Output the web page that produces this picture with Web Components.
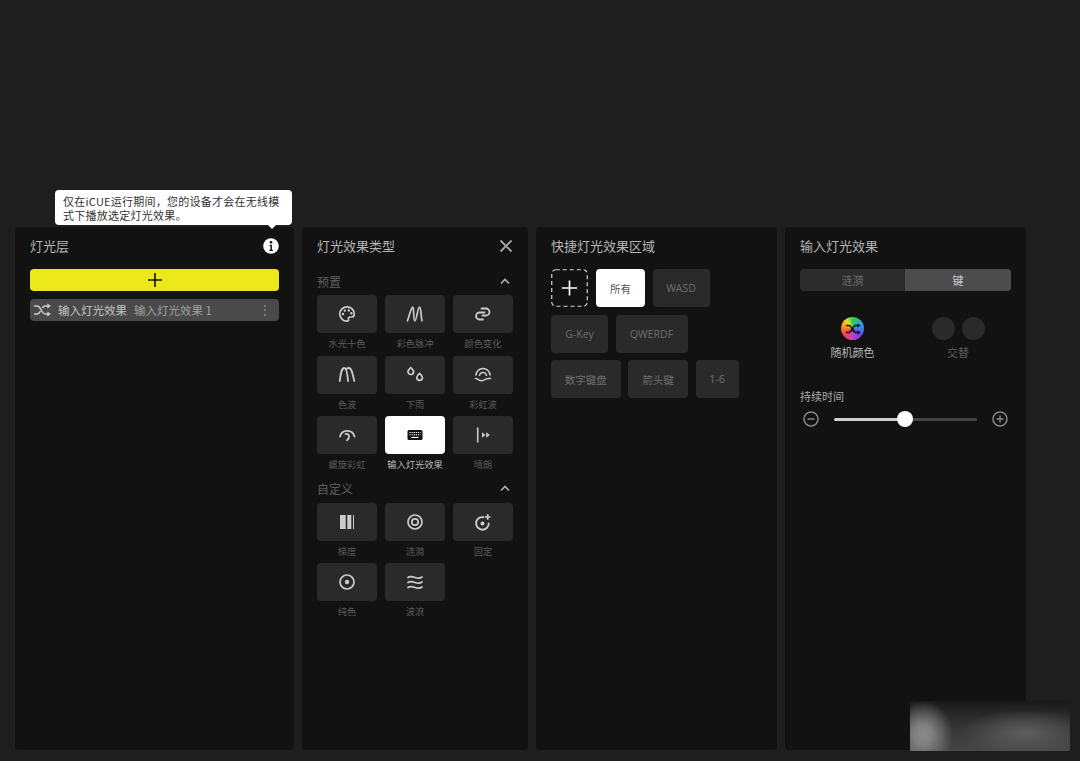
<!DOCTYPE html>
<html lang="zh">
<head>
<meta charset="utf-8">
<title>灯光层</title>
<style>
  html, body { margin: 0; height: 761px; overflow: hidden; background: #1e1e1e; }
  body { font-family: "Noto Sans CJK SC", "Open Sans", sans-serif; }
</style>
</head>
<body>
<app-shell>
  <info-tip slot="overlay">仅在iCUE运行期间，您的设备才会在无线模式下播放选定灯光效果。</info-tip>
  <blur-mark slot="overlay"></blur-mark>

  <side-panel title="灯光层" width="279" icon="info">
    <add-bar></add-bar>
    <layer-row name="输入灯光效果" sub="输入灯光效果 1"></layer-row>
  </side-panel>

  <side-panel title="灯光效果类型" width="226" icon="close">
    <effect-group title="预置">
      <effect-tile icon="palette" label="水光十色"></effect-tile>
      <effect-tile icon="pulse" label="彩色脉冲"></effect-tile>
      <effect-tile icon="link" label="颜色变化"></effect-tile>
      <effect-tile icon="wave" label="色波"></effect-tile>
      <effect-tile icon="rain" label="下雨"></effect-tile>
      <effect-tile icon="rainbow" label="彩虹波"></effect-tile>
      <effect-tile icon="spiral" label="螺旋彩虹"></effect-tile>
      <effect-tile icon="keyboard" label="输入灯光效果" active></effect-tile>
      <effect-tile icon="visor" label="晴朗"></effect-tile>
    </effect-group>
    <effect-group title="自定义">
      <effect-tile icon="gradient" label="梯度"></effect-tile>
      <effect-tile icon="ripple" label="涟漪"></effect-tile>
      <effect-tile icon="fixed" label="固定"></effect-tile>
      <effect-tile icon="solid" label="纯色"></effect-tile>
      <effect-tile icon="waves" label="波浪"></effect-tile>
    </effect-group>
  </side-panel>

  <side-panel title="快捷灯光效果区域" width="241">
    <zone-list>
      <zone-row>
        <zone-chip w="37.5"><svg width="37" height="38" viewBox="0 0 37 38"><rect x=".75" y=".75" width="35.5" height="36.5" rx="4" fill="none" stroke="#d4d4d4" stroke-width="1.2" stroke-dasharray="4 3"/><path d="M18.500 11.500v15M11 19h15" stroke="#fff" stroke-width="1.700"/></svg></zone-chip>
        <zone-chip active w="49">所有</zone-chip>
        <zone-chip w="57">WASD</zone-chip>
      </zone-row>
      <zone-row>
        <zone-chip w="57">G-Key</zone-chip>
        <zone-chip w="72">QWERDF</zone-chip>
      </zone-row>
      <zone-row>
        <zone-chip w="69.5">数字键盘</zone-chip>
        <zone-chip w="60">箭头键</zone-chip>
        <zone-chip w="43">1-6</zone-chip>
      </zone-row>
    </zone-list>
  </side-panel>

  <side-panel title="输入灯光效果" width="241">
    <seg-toggle left="涟漪" right="键"></seg-toggle>
    <color-modes></color-modes>
    <time-slider label="持续时间" value="50"></time-slider>
  </side-panel>
</app-shell>

<script>
const ICONS = {
  info: '<svg width="16" height="16" viewBox="0 0 16 16"><circle cx="8" cy="8" r="7.800" fill="#fff"/><circle cx="8" cy="4.200" r="1.300" fill="#121212"/><path d="M6.600 6.700h2.300v5h1v1.200H6.400v-1.200h1V7.900h-.8z" fill="#121212"/></svg>',
  close: '<svg width="14" height="14" viewBox="0 0 14 14"><path d="M1.500 1.500l11 11M12.500 1.500l-11 11" stroke="#a8a8a8" stroke-width="1.800" fill="none"/></svg>',
  palette: '<svg width="18" height="18" viewBox="0 0 18 18"><path d="M9 1.800a7.200 7.200 0 1 0 0 14.400c1.500 0 1.900-1 1.500-2-.4-1.100.2-2.200 1.500-2.200h2c1.300 0 2.200-1 2.200-3C16.200 4.800 13 1.800 9 1.800z" fill="none" stroke="#ccc" stroke-width="1.700"/><circle cx="5" cy="9" r="1.200" fill="#ccc"/><circle cx="6.800" cy="5.600" r="1.200" fill="#ccc"/><circle cx="10.800" cy="5.400" r="1.200" fill="#ccc"/><circle cx="13.300" cy="8.200" r="1.200" fill="#ccc"/></svg>',
  pulse: '<svg width="18" height="18" viewBox="0 0 18 18"><path d="M1.500 15.800C3.500 10 5.200 2.200 6.800 2.200 8.300 2.200 7 15.800 8.800 15.800 10.600 15.800 11.800 2.200 13.500 2.200 15.200 2.200 14.800 11 16 15.800" fill="none" stroke="#ccc" stroke-width="1.700" stroke-linecap="round"/></svg>',
  link: '<svg width="18" height="18" viewBox="0 0 18 18"><path d="M7.500 3.500H12a3.500 3.500 0 0 1 0 7H8.500" fill="none" stroke="#ccc" stroke-width="1.800" stroke-linecap="round"/><path d="M10.500 7.500H5.500a3.500 3.500 0 0 0 0 7H9" fill="none" stroke="#ccc" stroke-width="1.800" stroke-linecap="round"/></svg>',
  wave: '<svg width="18" height="18" viewBox="0 0 18 18"><path d="M1.800 15C2.800 6 3.800 2 6.300 2S9.500 8 10 15" fill="none" stroke="#ccc" stroke-width="1.800" stroke-linecap="round"/><path d="M8.300 2.800C9.200 2.200 10.200 2 11 2 13.800 2 14.500 8 16.300 15" fill="none" stroke="#ccc" stroke-width="1.800" stroke-linecap="round"/></svg>',
  rain: '<svg width="18" height="18" viewBox="0 0 18 18"><path d="M4.800 1.600c1.700 1.500 2.800 2.700 2.800 4.100a2.800 2.800 0 0 1-5.600 0c0-1.400 1.100-2.600 2.800-4.100z" fill="none" stroke="#ccc" stroke-width="1.700"/><path d="M13.600 7.400c1.700 1.500 2.800 2.700 2.800 4.100a2.800 2.800 0 0 1-5.600 0c0-1.400 1.100-2.600 2.800-4.100z" fill="none" stroke="#ccc" stroke-width="1.700"/></svg>',
  rainbow: '<svg width="18" height="18" viewBox="0 0 18 18"><path d="M2 9.500a7 7 0 0 1 14 0" fill="none" stroke="#ccc" stroke-width="1.600"/><path d="M5.500 10a3.500 3.500 0 0 1 7 0" fill="none" stroke="#ccc" stroke-width="1.600"/><path d="M1.500 12.500c2.500 0 3.500 2.700 6.500 2.200s4-2.700 8.500-2.200" fill="none" stroke="#ccc" stroke-width="1.600" stroke-linecap="round"/></svg>',
  spiral: '<svg width="18" height="18" viewBox="0 0 18 18"><path d="M2 10.500A7.500 7.500 0 0 1 16.500 10.500" fill="none" stroke="#ccc" stroke-width="1.800" stroke-linecap="round"/><path d="M7.500 8c2-.5 3.500.5 3.500 2.500 0 1.500-1 3-2 3.700" fill="none" stroke="#ccc" stroke-width="1.800" stroke-linecap="round"/></svg>',
  keyboard: '<svg width="18" height="18" viewBox="0 0 18 18"><rect x="1.500" y="4" width="15" height="10" rx="1.500" fill="#111"/><path d="M3.500 6.500h11M3.500 8.800h11" stroke="#fff" stroke-width="1.100" stroke-dasharray="1.200 .9"/><path d="M5.500 11.400h7" stroke="#fff" stroke-width="1.100"/></svg>',
  visor: '<svg width="18" height="18" viewBox="0 0 18 18"><path d="M3.700 1.500v15" stroke="#ccc" stroke-width="1.600"/><path d="M8 6.300l3.500 2.700L8 11.700zM12.200 6.300l3.700 2.700-3.700 2.700z" fill="#ccc"/></svg>',
  gradient: '<svg width="18" height="18" viewBox="0 0 18 18"><rect x="2" y="2" width="5.700" height="14" fill="#ccc"/><rect x="9.300" y="2" width="4" height="14" fill="#ccc"/><rect x="15" y="2" width="1" height="14" fill="#ccc"/></svg>',
  ripple: '<svg width="18" height="18" viewBox="0 0 18 18"><circle cx="9" cy="9" r="7" fill="none" stroke="#ccc" stroke-width="1.700"/><circle cx="9" cy="9" r="3.200" fill="none" stroke="#ccc" stroke-width="1.700"/></svg>',
  fixed: '<svg width="18" height="18" viewBox="0 0 18 18"><path d="M9.500 4.200a6.300 6.300 0 1 0 5.200 6.200" fill="none" stroke="#ccc" stroke-width="1.900" stroke-linecap="round"/><circle cx="8.500" cy="10.500" r="2" fill="#ccc"/><path d="M13.700 1.300v5.400M11 4h5.400" stroke="#ccc" stroke-width="1.700"/></svg>',
  solid: '<svg width="18" height="18" viewBox="0 0 18 18"><circle cx="9" cy="9" r="7" fill="none" stroke="#ccc" stroke-width="1.700"/><circle cx="9" cy="9" r="2.200" fill="#ccc"/></svg>',
  waves: '<svg width="18" height="18" viewBox="0 0 18 18"><g fill="none" stroke="#ccc" stroke-width="1.700" stroke-linecap="round"><path d="M2 4.500c2-1.500 4-1 7 0s5 1 7-.5"/><path d="M2 9.500c2-1.500 4-1 7 0s5 1 7-.5"/><path d="M2 14.500c2-1.500 4-1 7 0s5 1 7-.5"/></g></svg>',
  shuffle: '<svg width="18" height="14" viewBox="0 0 18 14"><g fill="none" stroke="#ccc" stroke-width="1.500"><path d="M1 3h3.500c3 0 4.500 8 7.500 8h3"/><path d="M1 11h3.500c1.300 0 2.200-1.300 3-2.800M9.300 5C10 3.900 10.900 3 12 3h3"/></g><path d="M14.300 .5 18 3l-3.700 2.500zM14.300 8.500 18 11l-3.700 2.500z" fill="#ccc"/></svg>'
};

class AppShell extends HTMLElement {
  constructor() {
    super();
    this.attachShadow({ mode: "open" });
    this.shadowRoot.innerHTML = `
      <style>
        :host { display: flex; gap: 8px; padding: 227px 0 0 15px; height: 523px; position: relative; }
      </style>
      <slot></slot>
      <slot name="overlay"></slot>
    `;
  }
}

class SidePanel extends HTMLElement {
  constructor() {
    super();
    this.attachShadow({ mode: "open" });
    const icon = this.getAttribute("icon");
    this.shadowRoot.innerHTML = `
      <style>
        :host { display: block; width: ${this.getAttribute("width")}px; height: 523px; background: #121212; border-radius: 4px; padding: 9px 15px 0; box-sizing: border-box; flex: none; }
        .head { display: flex; align-items: center; justify-content: space-between; height: 20px; margin-bottom: 13px; }
        .title { font-size: 13px; line-height: 20px; color: #b4b4b4; }
        .ico { display: flex; }
      </style>
      <div class="head">
        <span class="title">${this.getAttribute("title")}</span>
        ${icon ? `<span class="ico ${icon}">${ICONS[icon]}</span>` : ""}
      </div>
      <slot></slot>
    `;
  }
}

class InfoTip extends HTMLElement {
  constructor() {
    super();
    this.attachShadow({ mode: "open" });
    this.shadowRoot.innerHTML = `
      <style>
        :host { position: absolute; left: 55px; top: 190px; width: 237px; height: 35px; box-sizing: border-box; padding: 3.500px 8px; background: #fff; border-radius: 4px; color: #333; font-size: 11px; line-height: 14.500px; letter-spacing: .25px; }
        .arrow { position: absolute; left: 213px; bottom: -4px; width: 0; height: 0; border-left: 4px solid transparent; border-right: 4px solid transparent; border-top: 4px solid #fff; }
      </style>
      <slot></slot>
      <div class="arrow"></div>
    `;
  }
}

class BlurMark extends HTMLElement {
  constructor() {
    super();
    this.attachShadow({ mode: "open" });
    this.shadowRoot.innerHTML = `
      <style>
        :host { position: absolute; left: 910px; top: 701px; width: 160px; height: 50px;
          background:
            radial-gradient(ellipse 30px 34px at 13px 34px, #8a8a8a 0%, #808080 30%, rgba(120,120,120,0) 100%),
            radial-gradient(ellipse 65px 24px at 115px 32px, #5e5e5e 0%, rgba(94,94,94,0) 100%),
            linear-gradient(#1a1a1a 0%, #2f2f2f 40%, #474747 100%); }
      </style>
    `;
  }
}

class AddBar extends HTMLElement {
  constructor() {
    super();
    this.attachShadow({ mode: "open" });
    this.shadowRoot.innerHTML = `
      <style>
        :host { display: flex; align-items: center; justify-content: center; height: 22px; background: #ece81a; border-radius: 4px; margin-bottom: 8px; }
        svg { display: block; }
      </style>
      <svg width="14" height="14" viewBox="0 0 14 14"><path d="M7 0v14M0 7h14" stroke="#111" stroke-width="1.600"/></svg>
    `;
  }
}

class LayerRow extends HTMLElement {
  constructor() {
    super();
    this.attachShadow({ mode: "open" });
    this.shadowRoot.innerHTML = `
      <style>
        :host { display: flex; align-items: center; height: 22px; background: #4a4a4a; border-radius: 4px; padding: 0 13px 0 3px; font-size: 11.500px; }
        .ico { display: flex; width: 25px; }
        .name { color: #c4c4c4; margin-right: 7px; }
        .sub { color: #a0a0a0; flex: 1; }
        .dots { display: flex; flex-direction: column; gap: 2.500px; }
        .dots i { width: 2px; height: 2px; border-radius: 50%; background: #8a8a8a; }
      </style>
      <span class="ico">${ICONS.shuffle}</span>
      <span class="name">${this.getAttribute("name")}</span>
      <span class="sub">${this.getAttribute("sub")}</span>
      <span class="dots"><i></i><i></i><i></i></span>
    `;
  }
}

class EffectGroup extends HTMLElement {
  constructor() {
    super();
    this.attachShadow({ mode: "open" });
    this.shadowRoot.innerHTML = `
      <style>
        :host { display: block; padding-top: 2px; }
        .head { display: flex; align-items: center; justify-content: space-between; height: 20px; margin-bottom: 4px; color: #5f5f5f; font-size: 12px; }
        svg { display: block; margin-right: 3px; }
        .grid { display: grid; grid-template-columns: repeat(3, 60px); column-gap: 8px; }
      </style>
      <div class="head">
        <span>${this.getAttribute("title")}</span>
        <svg width="10" height="7" viewBox="0 0 10 7"><path d="M1 5.500l4-4 4 4" fill="none" stroke="#b0b0b0" stroke-width="1.600"/></svg>
      </div>
      <div class="grid"><slot></slot></div>
    `;
  }
}

class EffectTile extends HTMLElement {
  constructor() {
    super();
    this.attachShadow({ mode: "open" });
    const on = this.hasAttribute("active");
    this.shadowRoot.innerHTML = `
      <style>
        :host { display: block; height: 60.500px; }
        .box { height: 38px; border-radius: 4px; background: ${on ? "#fff" : "#2a2a2a"}; display: flex; align-items: center; justify-content: center; }
        .label { text-align: center; font-size: 9.250px; line-height: 21px; color: ${on ? "#b8b8b8" : "#5a5a5a"}; white-space: nowrap; }
      </style>
      <div class="box">${ICONS[this.getAttribute("icon")]}</div>
      <div class="label">${this.getAttribute("label")}</div>
    `;
  }
}

class ZoneList extends HTMLElement {
  constructor() {
    super();
    this.attachShadow({ mode: "open" });
    this.shadowRoot.innerHTML = `
      <style>
        :host { display: flex; flex-direction: column; gap: 7.500px; }
      </style>
      <slot></slot>
    `;
  }
}

class ZoneRow extends HTMLElement {
  constructor() {
    super();
    this.attachShadow({ mode: "open" });
    this.shadowRoot.innerHTML = `
      <style>
        :host { display: flex; gap: 7.500px; }
      </style>
      <slot></slot>
    `;
  }
}

class ZoneChip extends HTMLElement {
  constructor() {
    super();
    this.attachShadow({ mode: "open" });
    const on = this.hasAttribute("active");
    const plain = !this.textContent.trim();
    this.shadowRoot.innerHTML = `
      <style>
        :host { display: flex; align-items: center; justify-content: center; box-sizing: border-box; width: ${this.getAttribute("w")}px; height: 38px; border-radius: 4px; font-size: 10.500px; font-family: "Open Sans", "Noto Sans CJK SC", sans-serif;
          background: ${plain ? "transparent" : on ? "#fff" : "#2a2a2a"}; color: ${on ? "#555" : "#6e6e6e"}; }
      </style>
      <slot></slot>
    `;
  }
}

class SegToggle extends HTMLElement {
  constructor() {
    super();
    this.attachShadow({ mode: "open" });
    this.shadowRoot.innerHTML = `
      <style>
        :host { display: flex; height: 22px; border-radius: 4px; overflow: hidden; font-size: 11px; margin-bottom: 26px; }
        div { display: flex; align-items: center; justify-content: center; }
        .l { width: 105px; background: #2c2c2c; color: #6a6a6a; }
        .r { flex: 1; background: #4c4c4c; color: #d0d0d0; }
      </style>
      <div class="l">${this.getAttribute("left")}</div>
      <div class="r">${this.getAttribute("right")}</div>
    `;
  }
}

class ColorModes extends HTMLElement {
  constructor() {
    super();
    this.attachShadow({ mode: "open" });
    this.shadowRoot.innerHTML = `
      <style>
        :host { display: grid; grid-template-columns: 105px 1fr; font-size: 11px; margin-bottom: 26.500px; }
        .mode { display: flex; flex-direction: column; align-items: center; gap: 3px; }
        .swatches { display: flex; gap: 7px; height: 23px; }
        .dot { width: 23px; height: 23px; border-radius: 50%; background: #2a2a2a; }
        .rainbow { background: conic-gradient(#2fd04a 0deg, #2a9df0 70deg, #6a3ff0 130deg, #d83fb0 190deg, #f0483a 240deg, #f59a1e 285deg, #e8e020 325deg, #2fd04a 360deg); display: flex; align-items: center; justify-content: center; }
        .a { color: #b8b8b8; line-height: 18px; }
        .b { color: #5a5a5a; line-height: 18px; }
      </style>
      <div class="mode">
        <div class="swatches"><div class="dot rainbow"><svg width="16" height="12" viewBox="0 0 18 14"><g fill="none" stroke="#111" stroke-width="1.800"><path d="M1 3h3.500c3 0 4.500 8 7.500 8h3"/><path d="M1 11h3.500c3 0 4.500-8 7.500-8h3"/></g><path d="M14.300 .5 18 3l-3.700 2.500zM14.300 8.500 18 11l-3.700 2.500z" fill="#111"/></svg></div></div>
        <span class="a">随机颜色</span>
      </div>
      <div class="mode">
        <div class="swatches"><div class="dot"></div><div class="dot"></div></div>
        <span class="b">交替</span>
      </div>
    `;
  }
}

class TimeSlider extends HTMLElement {
  constructor() {
    super();
    this.attachShadow({ mode: "open" });
    this.shadowRoot.innerHTML = `
      <style>
        :host { display: block; font-size: 11px; color: #a8a8a8; }
        .label { line-height: 16px; margin-bottom: 7.500px; }
        .row { display: flex; align-items: center; height: 16px; }
        .btn { display: flex; flex: none; width: 16px; justify-content: center; margin-left: 3px; }
        .track { position: relative; flex: none; width: 143px; height: 3px; border-radius: 2px; margin: 0 12px 0 15px; background: linear-gradient(90deg, #d0d0d0 0 50%, #454545 50% 100%); }
        .thumb { position: absolute; left: 63px; top: -6.500px; width: 16px; height: 16px; border-radius: 50%; background: #fff; }
      </style>
      <div class="label">${this.getAttribute("label")}</div>
      <div class="row">
        <span class="btn"><svg width="16" height="16" viewBox="0 0 16 16"><circle cx="8" cy="8" r="7" fill="none" stroke="#888" stroke-width="1.500"/><path d="M4.500 8h7" stroke="#888" stroke-width="1.500"/></svg></span>
        <div class="track"><div class="thumb"></div></div>
        <span class="btn"><svg width="16" height="16" viewBox="0 0 16 16"><circle cx="8" cy="8" r="7" fill="none" stroke="#888" stroke-width="1.500"/><path d="M4.500 8h7M8 4.500v7" stroke="#888" stroke-width="1.500"/></svg></span>
      </div>
    `;
  }
}

customElements.define("app-shell", AppShell);
customElements.define("side-panel", SidePanel);
customElements.define("info-tip", InfoTip);
customElements.define("blur-mark", BlurMark);
customElements.define("add-bar", AddBar);
customElements.define("layer-row", LayerRow);
customElements.define("effect-group", EffectGroup);
customElements.define("effect-tile", EffectTile);
customElements.define("zone-list", ZoneList);
customElements.define("zone-row", ZoneRow);
customElements.define("zone-chip", ZoneChip);
customElements.define("seg-toggle", SegToggle);
customElements.define("color-modes", ColorModes);
customElements.define("time-slider", TimeSlider);
</script>
</body>
</html>
